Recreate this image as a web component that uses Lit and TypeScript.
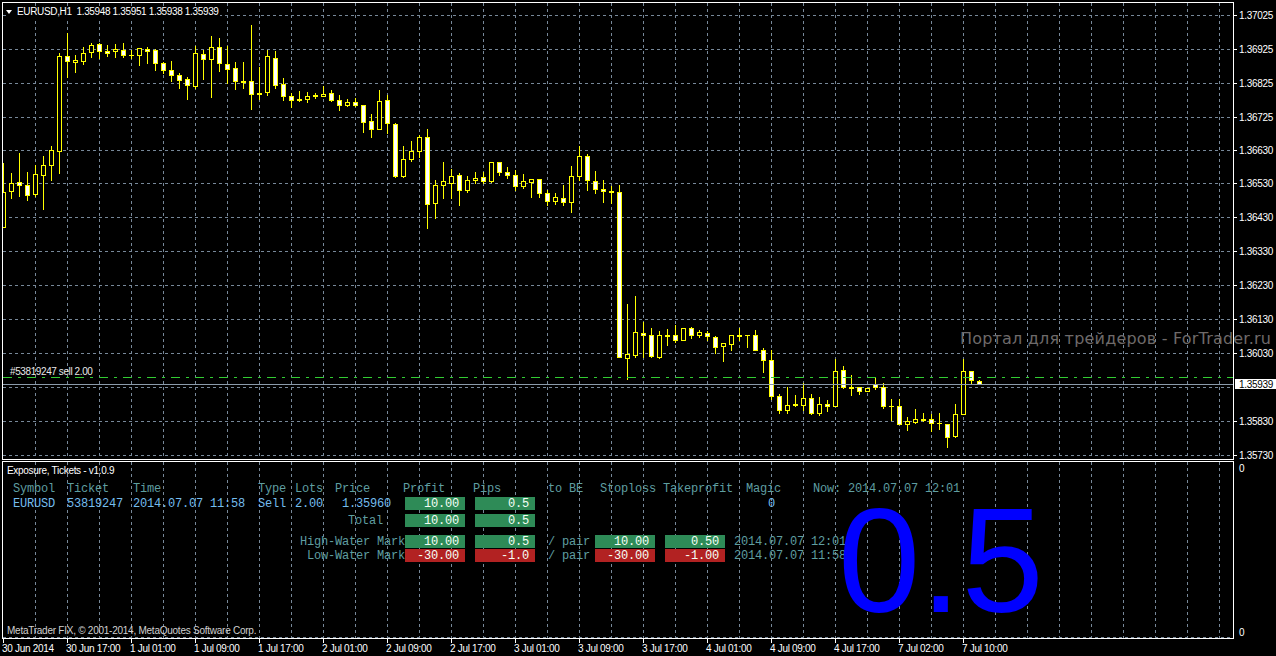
import { LitElement, html, css, svg } from "lit";
import { customElement } from "lit/decorators.js";

// wickTop, wickBottom, bodyTop, bodyBottom, filled — one candle every 8px from x=3
const C: number[][] = [
[163,228,192,228,0],[173,199,183,192,0],[153,197,182,186,1],[172,201,185,196,1],[165,197,174,195,0],[156,210,165,176,0],[146,181,150,166,0],[53,174,56,152,0],[33,78,56,62,1],[55,73,60,63,0],
[47,65,53,62,0],[43,58,45,53,0],[43,59,44,52,1],[45,57,51,54,1],[44,58,49,52,0],[43,58,50,56,1],[50,59,55,56,1],[48,66,48,56,0],[47,64,49,52,1],[49,71,50,64,1],
[62,74,63,71,1],[61,82,70,76,1],[73,89,75,81,1],[77,100,79,86,1],[46,89,53,87,0],[50,80,54,60,1],[36,98,47,60,0],[38,72,47,64,1],[46,84,64,70,1],[62,90,68,82,1],
[62,89,81,83,1],[25,110,81,95,1],[67,100,93,95,1],[50,96,56,93,0],[51,89,58,86,1],[78,101,84,97,1],[93,108,96,101,1],[91,102,99,101,1],[92,103,96,100,0],[93,99,95,97,1],
[86,97,94,97,0],[90,102,93,101,1],[95,111,100,106,1],[99,107,102,106,0],[98,107,102,106,1],[105,133,105,123,1],[114,138,121,130,1],[90,130,101,130,0],[95,134,100,124,1],[123,178,124,177,1],
[146,178,159,177,0],[141,162,151,160,0],[135,158,137,152,0],[129,229,137,205,1],[180,219,185,204,0],[162,199,181,186,0],[169,199,176,184,0],[173,206,175,191,1],[176,193,180,191,0],[172,184,178,181,0],
[172,184,177,182,1],[162,183,162,182,0],[162,176,162,173,1],[167,179,172,176,1],[170,191,175,187,1],[174,189,181,187,0],[179,198,179,183,0],[179,198,179,194,1],[190,206,193,202,1],[193,205,197,202,0],
[185,206,198,203,1],[166,213,176,203,0],[146,181,156,177,0],[154,191,156,181,1],[171,194,181,190,1],[180,203,189,192,1],[186,204,191,193,1],[185,358,192,358,1],[304,380,354,359,0],[296,358,332,356,0],
[322,358,333,336,1],[328,358,335,357,1],[331,359,335,358,0],[329,346,335,337,1],[325,343,335,341,1],[328,341,328,341,0],[327,339,328,336,1],[330,338,332,336,0],[331,341,333,337,1],[336,354,337,348,1],
[343,362,343,347,0],[335,351,335,345,0],[328,341,335,337,1],[335,348,335,336,1],[330,351,335,351,1],[348,373,350,361,1],[350,400,360,397,1],[394,414,396,411,1],[387,414,405,411,0],[395,407,404,406,1],
[383,411,398,406,0],[394,415,398,414,1],[397,416,404,414,0],[400,412,404,407,1],[359,407,371,407,0],[366,389,370,388,1],[375,396,387,389,1],[387,395,387,392,1],[388,392,388,392,0],[377,390,384,388,1],
[383,409,387,407,1],[399,421,406,407,1],[399,425,406,425,1],[417,431,421,425,0],[409,424,419,423,0],[413,422,419,421,1],[414,432,419,424,1],[413,430,423,424,1],[424,448,424,438,1],[404,438,414,437,0],
[359,415,371,415,0],[371,385,371,381,1],[380,385,381,385,1],
];

const HY = [15, 49, 83, 117, 150, 183, 217, 251, 285, 319, 353, 387, 421, 455];
const PRICES = ["1.37025","1.36925","1.36825","1.36725","1.36630","1.36530","1.36430","1.36330","1.36230","1.36130","1.36030","","1.35830","1.35730"];
const VX = Array.from({ length: 38 }, (_, i) => 35 + 32 * i);
const TIMES = ["30 Jun 2014","30 Jun 17:00","1 Jul 01:00","1 Jul 09:00","1 Jul 17:00","2 Jul 01:00","2 Jul 09:00","2 Jul 17:00","3 Jul 01:00","3 Jul 09:00","3 Jul 17:00","4 Jul 01:00","4 Jul 09:00","4 Jul 17:00","7 Jul 02:00","7 Jul 10:00"];

@customElement("app-root")
export class AppRoot extends LitElement {
  static styles = css`
    :host { display: block; width: 1276px; height: 656px; background: #000; overflow: hidden; }
    .screen { position: relative; display: grid; grid-template-columns: 1234px 42px; grid-template-rows: 460px 179px 17px; width: 1276px; height: 656px; background: #000; color: #fff; font-family: "Liberation Sans", Arial, sans-serif; font-size: 10px; letter-spacing: -0.3px; }
    .pane { position: relative; box-sizing: border-box; border: 1px solid #fff; margin-left: 2px; overflow: hidden; }
    .chart { margin-top: 2px; height: 458px; }
    .panel { margin-top: 1px; height: 178px; display: flex; flex-direction: column; padding-left: 4px; }
    svg.layer { position: absolute; left: 0; top: 0; display: block; }
    .grid { stroke: #778899; stroke-width: 1; stroke-dasharray: 3 3; shape-rendering: crispEdges; fill: none; }
    .bid { stroke: #8b9bab; stroke-width: 1; shape-rendering: crispEdges; }
    .order { stroke: #32cd32; stroke-width: 1; stroke-dasharray: 9 6 3 6; shape-rendering: crispEdges; }
    .wick, .body { fill: #ffff00; shape-rendering: crispEdges; }
    .in-up { fill: #000; shape-rendering: crispEdges; }
    .in-down { fill: #fff; shape-rendering: crispEdges; }
    .legend { position: absolute; left: 3px; top: 3px; display: flex; align-items: center; gap: 5px; height: 12px; padding-right: 1px; background: #000; white-space: pre; line-height: 12px; letter-spacing: -0.35px; }
    .caret { width: 0; height: 0; border-left: 3.5px solid transparent; border-right: 3.5px solid transparent; border-top: 4px solid #fff; }
    .order-label { position: absolute; left: 7px; top: 363px; line-height: 12px; color: #e8e8e8; letter-spacing: -0.4px; }
    .watermark { position: absolute; left: 960px; top: 329px; font-family: "DejaVu Sans", sans-serif; font-size: 16px; letter-spacing: 0.2px; line-height: 20px; color: #6e6a6a; white-space: pre; }
    .prices { position: relative; }
    .price { position: absolute; left: 5px; line-height: 12px; color: #fff; }
    .price::before { content: ""; position: absolute; left: -5px; top: 5px; width: 3px; height: 1px; background: #fff; }
    .last { position: absolute; left: 1px; right: 0; top: 379px; height: 10px; line-height: 11px; background: #fff; color: #000; padding-left: 4px; }
    .title { position: relative; padding-top: 2px; line-height: 14px; color: #fff; }
    .table { position: relative; display: grid; margin: 4px 0 0 6px; grid-template-columns: 54px 66px 125px 37px 40px 70px 70px 73px 47px 70px 69px 12px 67px 1fr; grid-template-rows: 15px 17px 21px 14px 13px; align-items: start; font-family: "Liberation Mono", monospace; font-size: 12px; letter-spacing: -0.2px; line-height: 15px; white-space: pre; color: #74bdee; }
    .h { color: #5f9ea0; }
    .n2 { margin-left: -2px; }
    .p5 { margin-left: 5px; }
    .r { text-align: right; }
    .box { height: 13px; width: 60px; text-align: right; padding-right: 6px; box-sizing: border-box; color: #f5fff5; }
    .green { background: #2e8b57; }
    .red { background: #b22222; }
    .magic { padding-left: 22px; }
    .footer { position: relative; margin-top: auto; line-height: 14px; color: #d0d0d0; letter-spacing: -0.25px; }
    .big { position: absolute; left: 835px; top: 39px; font-size: 148px; letter-spacing: 0; line-height: 120px; color: #0000ff; }
    .times { grid-column: 1 / 3; display: flex; padding-left: 2px; }
    .time { position: relative; flex: 0 0 64px; padding-top: 4px; line-height: 12px; white-space: pre; }
    .time::before { content: ""; position: absolute; left: 1px; top: 0; width: 1px; height: 4px; background: #fff; }
    .zero { position: absolute; left: 5px; line-height: 12px; }
  `;

  private grid(y1: number, y2: number, rows: number[]) {
    return svg`
      ${VX.map((x) => svg`<line class="grid" x1=${x + 0.5} x2=${x + 0.5} y1=${y1} y2=${y2}></line>`)}
      ${rows.map((y) => svg`<line class="grid" x1="3" x2="1233" y1=${y + 0.5} y2=${y + 0.5}></line>`)}
    `;
  }

  private candles() {
    return C.map(([wt, wb, bt, bb, f], i) => {
      const x = 3 + 8 * i;
      const h = Math.max(1, bb - bt);
      return svg`
        <rect class="wick" x=${x} y=${wt} width="1" height=${wb - wt}></rect>
        <rect class="body" x=${x - 2} y=${bt} width="5" height=${h}></rect>
        ${h > 2 ? svg`<rect class=${f ? "in-down" : "in-up"} x=${x - 1} y=${bt + 1} width="3" height=${h - 2}></rect>` : ""}
      `;
    });
  }

  render() {
    return html`
      <div class="screen">
        <div class="pane chart">
          <svg class="layer" width="1230" height="456" viewBox="3 3 1230 456">
            ${this.grid(3, 459, HY)}
            ${this.candles()}
            <line class="order" x1="3" x2="1233" y1="377.5" y2="377.5"></line>
            <line class="bid" x1="3" x2="1233" y1="384.5" y2="384.5"></line>
          </svg>
          <div class="order-label">#53819247 sell 2.00</div>
          <div class="legend"><span class="caret"></span><span>EURUSD,H1  1.35948 1.35951 1.35938 1.35939</span></div>
        </div>
        <div class="prices">
          ${HY.map((y, i) => PRICES[i]
            ? html`<div class="price" style="top:${y - 5}px">${PRICES[i]}</div>`
            : "")}
          <div class="last">1.35939</div>
        </div>

        <div class="pane panel">
          <svg class="layer" width="1230" height="176" viewBox="3 462 1230 176">
            ${this.grid(462, 638, [637])}
          </svg>
          <div class="title">Exposure, Tickets - v1.0.9</div>
          <div class="table">
            <span class="h">Symbol</span><span class="h">Ticket</span><span class="h">Time</span><span class="h">Type</span><span class="h">Lots</span><span class="h">Price</span><span class="h n2">Profit</span><span class="h n2">Pips</span><span class="h">to BE</span><span class="h p5">Stoploss</span><span class="h n2">Takeprofit</span><span></span><span class="h">Magic</span><span class="h">Now: 2014.07.07 12:01</span>

            <span>EURUSD</span><span>53819247</span><span>2014.07.07 11:58</span><span>Sell</span><span>2.00</span><span class="r" style="margin-right:14px">1.35960</span><span class="box green">10.00</span><span class="box green">0.5</span><span></span><span></span><span></span><span></span><span class="magic">0</span><span></span>

            <span style="grid-column:1 / 7;margin-right:22px" class="h r">Total</span><span class="box green">10.00</span><span class="box green">0.5</span><span style="grid-column:9 / -1"></span>

            <span style="grid-column:1 / 7" class="h r">High-Water Mark</span><span class="box green">10.00</span><span class="box green">0.5</span><span class="h">/ pair</span><span class="box green">10.00</span><span class="box green">0.50</span><span class="h" style="grid-column:12 / -1">2014.07.07 12:01</span>

            <span style="grid-column:1 / 7" class="h r">Low-Water Mark</span><span class="box red">-30.00</span><span class="box red">-1.0</span><span class="h">/ pair</span><span class="box red">-30.00</span><span class="box red">-1.00</span><span class="h" style="grid-column:12 / -1">2014.07.07 11:58</span>
          </div>
          <div class="footer">MetaTrader FIX, © 2001-2014, MetaQuotes Software Corp.</div>
          <div class="big">0.5</div>
        </div>
        <div class="prices">
          <div class="zero" style="top:3px">0</div>
          <div class="zero" style="top:167px">0</div>
        </div>

        <div class="times">
          ${TIMES.map((t) => html`<div class="time">${t}</div>`)}
        </div>
        <div class="watermark">Портал для трейдеров - ForTrader.ru</div>
      </div>
    `;
  }
}
